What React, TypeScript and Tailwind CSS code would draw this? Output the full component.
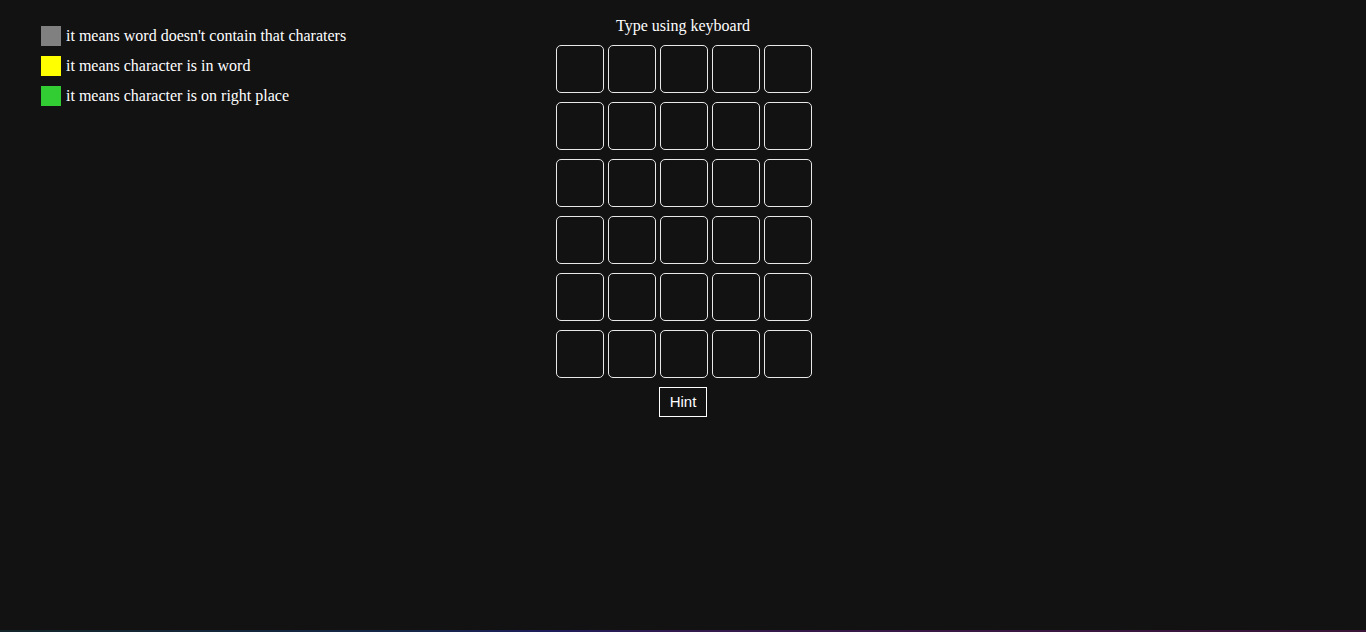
import React from "react";

const serif = { fontFamily: '"Liberation Serif", "Times New Roman", serif' };

export default function App() {
  const rows = Array.from({ length: 6 });
  const cols = Array.from({ length: 5 });
  return (
    <div className="h-screen w-full bg-[#121213] flex flex-col text-white overflow-hidden" style={serif}>
      <div className="flex-1 grid grid-cols-[1fr_auto_1fr]">
        <div className="pl-[41px] pt-[26px] flex flex-col gap-[10px] text-[16px] leading-[18px]">
          <div className="flex items-center gap-[5px]">
            <span className="w-[20px] h-[20px] bg-[#808080] shrink-0" />
            <span className="-mt-[1px]">it means word doesn't contain that charaters</span>
          </div>
          <div className="flex items-center gap-[5px]">
            <span className="w-[20px] h-[20px] bg-[#ffff00] shrink-0" />
            <span className="-mt-[1px]">it means character is in word</span>
          </div>
          <div className="flex items-center gap-[5px]">
            <span className="w-[20px] h-[20px] bg-[#32cd32] shrink-0" />
            <span className="-mt-[1px]">it means character is on right place</span>
          </div>
        </div>
        <div className="flex flex-col items-center pt-[16px]">
          <div className="text-[16px] leading-[19px] mb-[10px]">Type using keyboard</div>
          <div className="grid grid-cols-[repeat(5,48px)] gap-x-[4px] gap-y-[9px] ml-[2px]">
            {rows.map((_, r) =>
              cols.map((_, c) => (
                <div key={`${r}-${c}`} className="w-[48px] h-[48px] border border-[#e8e8e8] rounded-[5px]" />
              ))
            )}
          </div>
          <button
            className="mt-[9px] w-[48px] h-[30px] border border-white text-white text-[15px] bg-transparent flex items-center justify-center"
            style={{ fontFamily: '"Liberation Sans", Arial, sans-serif' }}
          >
            Hint
          </button>
        </div>
        <div />
      </div>
      <div className="h-[2px] w-full bg-[linear-gradient(90deg,#14262a_0%,#16284a_30%,#1e1d5c_40%,#331a4f_50%,#3a1845_70%,#3a1538_100%)]" />
    </div>
  );
}
